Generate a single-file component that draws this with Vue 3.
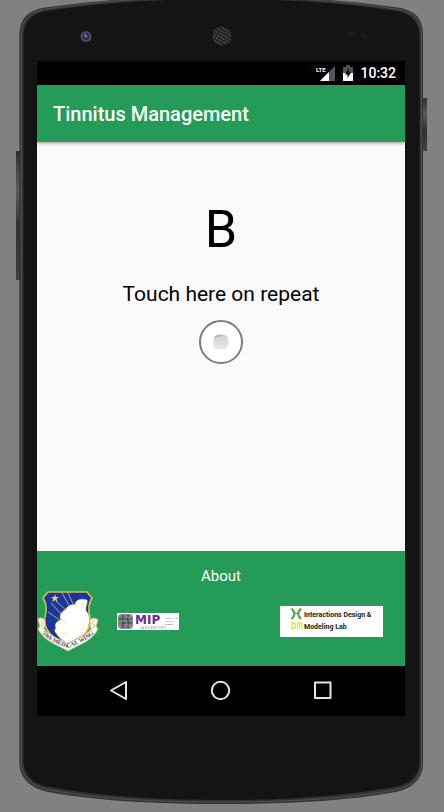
<script setup>
import { ref } from 'vue'

const letter = ref('B')
const rays = [
  'M25 3 L33 17',
  'M31 3 L37 16',
  'M19 11 L30 21',
  'M14 13 L26 26',
  'M11 22 L24 31'
]
</script>

<template>
  <div class="stage">
    <div class="phone">
      <svg class="shell" viewBox="0 0 444 812" preserveAspectRatio="none" aria-hidden="true">
        <defs>
          <linearGradient id="side" x1="0" y1="0" x2="0" y2="1">
            <stop offset="0" stop-color="#303030" />
            <stop offset="0.3" stop-color="#5c5c5c" />
            <stop offset="0.6" stop-color="#303030" />
            <stop offset="1" stop-color="#414141" />
          </linearGradient>
          <pattern id="mesh" width="3" height="3" patternUnits="userSpaceOnUse" patternTransform="rotate(30)">
            <rect width="3" height="3" fill="#585858" />
            <circle cx="1.5" cy="1.5" r="1.2" fill="#0b0b0b" />
          </pattern>
          <radialGradient id="lens">
            <stop offset="0" stop-color="#5555c0" />
            <stop offset="0.45" stop-color="#23235c" />
            <stop offset="0.6" stop-color="#33333c" />
            <stop offset="1" stop-color="#66666a" />
          </radialGradient>
        </defs>
        <rect x="16" y="151" width="5" height="129" fill="url(#side)" />
        <rect x="422" y="98" width="5" height="53" fill="url(#side)" />
        <path d="M19.500 400 V34 C20 17 30 9 49 7 C105 -1 165 -4 222 -4 S338 -1 394 7 C413 9 423 17 423 34 V764 C423 779 411 789 396 792 C340 802 280 804 222 804 S104 802 48 792 C33 789 19.500 779 19.500 764 Z" fill="#333436" />
        <path d="M21.5 400 V34 C21.5 19 31 10.500 50 8.500 C105 0 165 -3 222 -3 S338 0 393 8.500 C412 10.500 421.500 19 421.500 34 V764 C421.500 778 410 787 395 790 C340 800 280 802 222 802 S104 800 49 790 C34 787 21.500 778 21.500 764 Z" fill="#333" stroke="#515255" stroke-width="1" />
        <path d="M23.500 400 V36 C23.500 21 33 12.500 50 10.500 C105 2 165 -1 222 -1 S338 2 393 10.500 C410 12.500 419.500 21 419.500 36 V762 C419.500 776 409 785 394 787 C340 797 280 800 222 800 S104 797 50 787 C35 785 23.500 776 23.500 762 Z" fill="#141414" />
        <circle cx="86" cy="36.500" r="5.300" fill="url(#lens)" />
        <circle cx="85.500" cy="35.500" r="1" fill="#a5a5e8" />
        <circle cx="222" cy="36" r="9.500" fill="url(#mesh)" />
        <circle cx="350" cy="35" r="4" fill="#1d1919" />
        <circle cx="363" cy="35" r="2.500" fill="#1f1b1b" />
      </svg>

      <div class="screen">
        <div class="status">
          <svg class="signal" viewBox="0 0 20 18" width="20" height="18" aria-hidden="true">
            <path d="M19 2 V17 H4 Z" fill="#555" />
            <path d="M13 8 V17 H4 Z" fill="#fff" />
            <path d="M0 1 H11 V8 H0 Z" fill="#000" />
            <text x="0" y="8" class="lte">LTE</text>
          </svg>
          <svg class="battery" viewBox="0 0 10 16" width="10" height="16" aria-hidden="true">
            <path d="M3 0 H7 V2 H10 V8 H0 V2 H3 Z" fill="#505050" />
            <path d="M0 8 H10 V16 H0 Z" fill="#fff" />
            <path d="M6 3 L2 9.500 H4.500 V13 L8 7.500 H6 Z" fill="#000" />
          </svg>
          <time class="clock">10:32</time>
        </div>

        <header class="appbar">
          <h1>Tinnitus Management</h1>
        </header>

        <main class="content">
          <p class="letter">{{ letter }}</p>
          <p id="prompt" class="prompt">Touch here on repeat</p>
          <button class="touch" type="button" aria-labelledby="prompt">
            <svg viewBox="0 0 46 46" width="46" height="46" aria-hidden="true">
              <defs>
                <linearGradient id="dimple" x1="0.2" y1="0" x2="0.5" y2="1">
                  <stop offset="0" stop-color="#a2a2a2" />
                  <stop offset="0.25" stop-color="#d5d5d5" />
                  <stop offset="1" stop-color="#e9e9e9" />
                </linearGradient>
              </defs>
              <circle cx="23" cy="23" r="21" fill="#fff" stroke="#7c7c7c" stroke-width="2" />
              <rect x="15.500" y="15.500" width="15" height="15" rx="5.500" fill="url(#dimple)" />
            </svg>
          </button>
        </main>

        <footer class="footer">
          <a class="about" href="#about">About</a>
          <div class="logos">
            <svg class="seal" viewBox="0 0 62 62" width="62" height="62" aria-hidden="true">
              <path d="M11 2 H50 L55 8 C51 14 51 20 53 27 C55 39 47 48 30 55 C14 48 6 39 8 27 C10 20 10 14 6 8 Z" fill="#18379f" stroke="#e5bf3d" stroke-width="1.500" />
              <g fill="none" stroke="#d9c775" stroke-width="0.800">
                <path v-for="ray in rays" :key="ray" :d="ray" />
              </g>
              <path d="M18 4 L19 7 H22 L19.600 8.800 L20.500 12 L18 10 L15.300 12 L16.200 8.800 L14 7 H17 Z" fill="#f2cd48" />
              <path d="M24 30 C22 26 24 22 28 20 C31 15 35 14 38 15 C38 10 44 8 50 10 C51 13 48 17 49 21 C52 24 53 28 52 33 C51 43 43 48 30 53 C25 50 21 47 19 43 C17 41 18 39 19 38 C17 34 20 31 24 30 Z" fill="#fffffb" stroke="#eadb91" stroke-width="0.500" />
              <path d="M25 43 Q28 45 30 42 M24 30 Q28 31 29 34 M45 12 Q45 16 47 18" fill="none" stroke="#dfcf87" stroke-width="0.700" />
              <path d="M1 29 C3 27 7 28 8 31 L7 39 C14 47 22 49 31 53 C40 49 48 47 54 39 L53 31 C54 27 59 28 61 30 L59 36 L61 39 C55 51 43 54 31 61 C19 54 7 51 1 39 L3 36 Z" fill="#fffff4" stroke="#e5c96c" stroke-width="0.800" />
              <path d="M4 30 L6 33 L4 36 L7 40 M57 30 L55 33 L58 36 L54 40" fill="none" stroke="#c9ad58" stroke-width="0.700" />
              <path id="ribbon" d="M4 43 C12 51 21 54 31 58 C41 54 50 51 58 42" fill="none" />
              <text class="motto"><textPath href="#ribbon" startOffset="1">59th MEDICAL WING</textPath></text>
            </svg>

            <svg class="mip" viewBox="0 0 62 17" width="62" height="17" aria-hidden="true">
              <rect width="62" height="17" fill="#fff" />
              <rect x="1" y="1" width="15" height="15" rx="4" fill="#85858c" />
              <path d="M2 6 H15 M2 10 H15 M6 2 V15 M11 2 V15" stroke="#2f353c" stroke-width="1" />
              <path d="M3 11 L7 6 L11 12 M9 3 L14 7" fill="none" stroke="#54bc67" stroke-width="1" />
              <path d="M2 9 L5 14 M7 5 L10 3 M9 14 L13 11" fill="none" stroke="#a855b5" stroke-width="1" />
              <text x="18" y="11" class="mip-name">MIP</text>
              <text x="23" y="16" class="mip-sub">L A B O R A T O R Y</text>
              <g class="mip-tiny">
                <text x="48" y="6">HUMAN AND</text>
                <text x="48" y="9">MACHINE</text>
                <text x="48" y="12">STUDIES</text>
              </g>
            </svg>

            <svg class="idml" viewBox="0 0 103 31" width="103" height="31" aria-hidden="true">
              <rect width="103" height="31" fill="#fff" />
              <path d="M11.500 2.500 Q17 7.500 11.500 13 M21 2.500 Q15.500 7.500 21 13" fill="none" stroke="#53a04a" stroke-width="2" />
              <path d="M14 7.500 H18.500" stroke="#53a04a" stroke-width="1" />
              <path d="M12 17 V23 M11 17 H13 Q15.500 17 15.500 20 Q15.500 22.500 13 22.500 H11 M17.500 23 V17 H21 Q22 17 22 18 V23 M19.700 17 V23" fill="none" stroke="#e2e23a" stroke-width="1.300" />
              <text x="24" y="11" class="lab">Interactions Design &amp;</text>
              <text x="24" y="23" class="lab">Modeling Lab</text>
            </svg>
          </div>
        </footer>

        <nav class="navbar">
          <button type="button" aria-label="Back">
            <svg viewBox="0 0 24 24" width="24" height="24" aria-hidden="true">
              <path d="M19 3 V20 L4 11.500 Z" />
            </svg>
          </button>
          <button type="button" aria-label="Home">
            <svg viewBox="0 0 24 24" width="24" height="24" aria-hidden="true">
              <circle cx="11.500" cy="11.500" r="8.700" />
            </svg>
          </button>
          <button type="button" aria-label="Recent apps">
            <svg viewBox="0 0 24 24" width="24" height="24" aria-hidden="true">
              <rect x="4" y="3.500" width="15.500" height="15.500" />
            </svg>
          </button>
        </nav>
      </div>
    </div>
  </div>
</template>

<style>
body {
  background: #818181;
}
</style>

<style scoped>
.stage {
  font-family: Roboto, sans-serif;
  color: #000;
}

.phone {
  position: relative;
  display: flex;
  min-height: 100vh;
  box-sizing: border-box;
  padding: 61px 39px 96px 37px;
}

.shell {
  position: absolute;
  inset: 0;
  width: 100%;
  height: 100%;
}

.screen {
  position: relative;
  display: flex;
  flex: 1;
  flex-direction: column;
  background: #fafafa;
}

.status {
  display: flex;
  align-items: center;
  justify-content: flex-end;
  height: 24px;
  padding-right: 9px;
  background: #000;
  color: #fff;
}

.battery {
  margin: 0 7px;
}

.clock {
  font-size: 14px;
  font-weight: 500;
  line-height: 24px;
}

.lte {
  font: 700 6px Roboto, sans-serif;
  fill: #fff;
}

.appbar {
  display: flex;
  align-items: center;
  height: 57px;
  padding: 0 16px;
  background: #249b57;
  box-shadow: 0 1px 4px rgba(0, 0, 0, 0.4);
}

.appbar h1 {
  margin: 0;
  color: #fff;
  font-size: 20px;
  font-weight: 500;
  line-height: 24px;
}

.content {
  display: flex;
  flex: 1;
  flex-direction: column;
  align-items: center;
  padding-top: 56px;
}

.letter {
  margin: 0;
  font-size: 52px;
  line-height: 64px;
}

.prompt {
  margin: 20px 0 13px;
  font-size: 21px;
  line-height: 24px;
}

.touch {
  padding: 0;
  border: 0;
  background: none;
}

svg {
  display: block;
}

.footer {
  display: flex;
  flex-direction: column;
  height: 115px;
  background: #249b57;
}

.about {
  align-self: center;
  margin-top: 15px;
  color: #fff;
  font-size: 15px;
  line-height: 20px;
  text-decoration: none;
}

.logos {
  display: flex;
  align-items: center;
  gap: 18px;
  margin-top: 4px;
  padding-right: 22px;
}

.idml {
  margin-left: auto;
}

.motto {
  font: 700 6px "Liberation Serif", serif;
  fill: #3d4b89;
}

.mip-name {
  font: 700 12px "DejaVu Sans", sans-serif;
  fill: #6b2b9c;
}

.mip-sub {
  font: 3px Lato, sans-serif;
  fill: #777;
}

.mip-tiny {
  font: 2px Lato, sans-serif;
  fill: #555;
}

.lab {
  font: 700 7px Roboto, sans-serif;
  fill: #222;
}

.navbar {
  display: flex;
  align-items: center;
  justify-content: center;
  gap: 78px;
  height: 50px;
  background: #000;
}

.navbar button {
  padding: 0;
  border: 0;
  background: none;
}

.navbar svg {
  fill: none;
  stroke: #e6e6e6;
  stroke-width: 2;
  stroke-linejoin: round;
}
</style>
